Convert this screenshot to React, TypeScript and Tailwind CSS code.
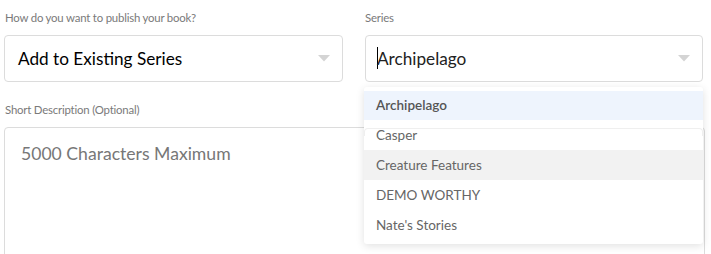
const series = ['Casper', 'Creature Features', 'DEMO WORTHY', "Nate's Stories"];

function Caret() {
  return (
    <svg width="12" height="7" viewBox="0 0 12 7" className="shrink-0">
      <path d="M0 0 L12 0 L6 6.5 Z" fill="#d4d4d4" />
    </svg>
  );
}

export default function App() {
  return (
    <div className="relative h-[254px] w-[711px] overflow-hidden bg-white font-['Lato',sans-serif]">
      <div className="flex gap-[22px] pl-[4px] pr-[8px] pt-[9px]">
        <div className="w-[339px]">
          <div className="mb-[8px] pl-[1px] text-[11.4px] leading-[18px] tracking-[-0.2px] text-[#7a7a7a]">
            How do you want to publish your book?
          </div>
          <div className="flex h-[47px] items-center justify-between rounded-[4px] border-[1.5px] border-[#dcdcdc] pl-[13px] pr-[12px]">
            <span className="text-[17.2px] text-black">Add to Existing Series</span>
            <Caret />
          </div>
        </div>
        <div className="relative w-[338px]">
          <div className="mb-[8px] text-[11.4px] leading-[18px] tracking-[-0.2px] text-[#7a7a7a]">Series</div>
          <div className="flex h-[47px] items-center justify-between rounded-[4px] border-[1.5px] border-[#dcdcdc] pl-[11px] pr-[12px]">
            <span className="flex items-center text-[17.2px] text-[#222]">
              <span className="mr-[-1px] h-[22px] w-[1px] bg-black" />
              Archipelago
            </span>
            <Caret />
          </div>
        </div>
      </div>

      <div className="pl-[4px] pr-[6px] pt-[19px]">
        <div className="mb-[8px] pl-[1px] text-[11.4px] leading-[18px] tracking-[-0.2px] text-[#7a7a7a]">
          Short Description (Optional)
        </div>
        <div className="h-[140px] rounded-[4px] border-[1.5px] border-[#dcdcdc] px-[16px] pt-[13px]">
          <span className="text-[17.6px] text-[#777]">5000 Characters Maximum</span>
        </div>
      </div>

      {/* open series menu */}
      <div className="absolute left-[364px] top-[87px] w-[339px] rounded-[3px] bg-white pt-[4px] shadow-[0_2px_8px_rgba(0,0,0,0.12)]">
        <div className="flex h-[29px] items-center bg-[#eef4fd] px-[12px] text-[13.5px] font-semibold text-[#555]">
          Archipelago
        </div>
        <div className="relative pb-[4px]">
          <div className="absolute left-0 right-0 top-[8px] h-[8px] rounded-t-[4px] border-x border-t border-[#efefef]" />
          {series.map((s) => (
            <div
              key={s}
              className={
                'relative flex h-[30px] items-center px-[12px] text-[13.5px] text-[#666] ' +
                (s === 'Creature Features' ? 'bg-[#f2f2f2]' : '')
              }
            >
              {s}
            </div>
          ))}
        </div>
      </div>
    </div>
  );
}
